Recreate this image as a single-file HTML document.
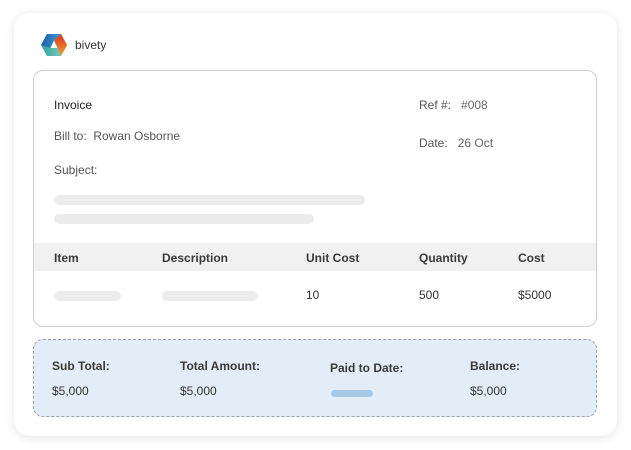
<!DOCTYPE html>
<html><head><style>
*{margin:0;padding:0;box-sizing:border-box}
body{width:631px;height:450px;background:#fff;font-family:"Liberation Sans",sans-serif;color:#333;position:relative;overflow:hidden}
.a{position:absolute;white-space:nowrap;font-size:12px;line-height:14px}
.outer{position:absolute;left:14px;top:13px;width:603px;height:423px;border-radius:16px;background:#fff;box-shadow:0 2px 10px rgba(0,0,0,0.10)}
.inner{position:absolute;left:33px;top:70px;width:564px;height:257px;border:1px solid #cfcfcf;border-radius:10px;background:#fff;overflow:hidden}
.band{position:absolute;left:0;top:172px;width:100%;height:28px;background:#f1f1f1}
.bar{position:absolute;height:10px;border-radius:5px;background:#ececec}
.sum{position:absolute;left:33px;top:339px;width:564px;height:78px;border:1px dashed #9aa3ab;border-radius:10px;background:#e2edf7}
.b{font-weight:bold;color:#3a3a3a}
.g{color:#555}
</style></head><body>
<div class="outer"></div>
<svg style="position:absolute;left:41px;top:33px" width="26" height="24" viewBox="0 0 26 24">
<defs>
<linearGradient id="l1" x1="0" y1="0" x2="1" y2="0"><stop offset="0" stop-color="#1a5fb0"/><stop offset="1" stop-color="#3a9ad6"/></linearGradient>
<linearGradient id="l2" x1="0" y1="0" x2="0" y2="1"><stop offset="0" stop-color="#e0302a"/><stop offset="1" stop-color="#f5a020"/></linearGradient>
<linearGradient id="l3" x1="0" y1="0" x2="1" y2="0"><stop offset="0" stop-color="#2aa39c"/><stop offset="1" stop-color="#8fd2c8"/></linearGradient>
</defs>
<polygon points="6,1 20,1 26,12 20,23 6,23 0,12" fill="url(#l3)"/>
<polygon points="0,12 6,1 20,1 13,7 9,15" fill="url(#l1)"/>
<polygon points="20,1 26,12 20,23 17,15 13,7" fill="url(#l2)"/>
<polygon points="13,8 16.5,15 9.5,15" fill="#fff"/>
</svg>
<div class="a" style="left:75px;top:38px;font-size:12px">bivety</div>
<div class="inner">
<div class="band"></div>
<div class="bar" style="left:20px;top:124px;width:311px"></div>
<div class="bar" style="left:20px;top:143px;width:260px"></div>
<div class="bar" style="left:20px;top:220px;width:67px"></div>
<div class="bar" style="left:128px;top:220px;width:96px"></div>
</div>
<div class="a" style="left:54px;top:98px;color:#222">Invoice</div>
<div class="a g" style="left:54px;top:129px">Bill to:&nbsp; Rowan Osborne</div>
<div class="a g" style="left:54px;top:163px">Subject:</div>
<div class="a g" style="left:419px;top:98px">Ref #:&nbsp;&nbsp; <span style="color:#666">#008</span></div>
<div class="a g" style="left:419px;top:136px">Date:&nbsp;&nbsp; <span style="color:#666">26 Oct</span></div>
<div class="a b" style="left:54px;top:251px">Item</div>
<div class="a b" style="left:162px;top:251px">Description</div>
<div class="a b" style="left:306px;top:251px">Unit Cost</div>
<div class="a b" style="left:419px;top:251px">Quantity</div>
<div class="a b" style="left:518px;top:251px">Cost</div>
<div class="a" style="left:306px;top:288px">10</div>
<div class="a" style="left:419px;top:288px">500</div>
<div class="a" style="left:518px;top:288px">$5000</div>
<div class="sum"></div>
<div class="a b" style="left:52px;top:359px">Sub Total:</div>
<div class="a b" style="left:180px;top:359px">Total Amount:</div>
<div class="a b" style="left:330px;top:361px">Paid to Date:</div>
<div class="a b" style="left:470px;top:359px">Balance:</div>
<div class="a" style="left:52px;top:384px">$5,000</div>
<div class="a" style="left:180px;top:384px">$5,000</div>
<div style="position:absolute;left:331px;top:390px;width:42px;height:7px;border-radius:4px;background:#a7c8e6"></div>
<div class="a" style="left:470px;top:384px">$5,000</div>
</body></html>
